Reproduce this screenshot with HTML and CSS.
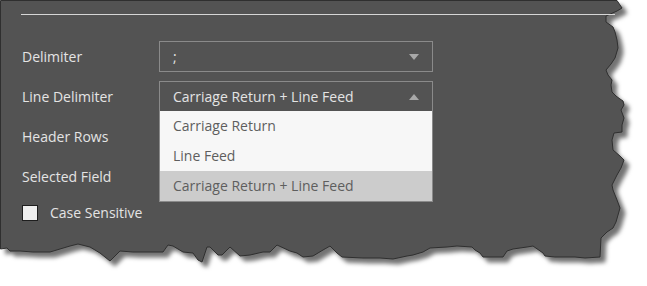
FILE: index.html
```html
<!DOCTYPE html>
<html lang="en">
<head>
  <meta charset="UTF-8">
  <meta name="viewport" content="width=device-width, initial-scale=1">
  <title>CSV Options</title>
  <link rel="stylesheet" href="styles.css">
</head>
<body>

  <div class="sheet">
    <!-- torn paper background -->
    <svg class="paper" width="647" height="286" viewBox="0 0 647 286">
      <path d="M0.5,0.5 L617,0.5 L620,5 L622,8 L617,11 L606,16 L606,22 L613,27 L615,32 L617,40 L618,48 L615,58 L611,64 L606,70 L608,75 L612,80 L611,85 L612,92 L616,96 L620,99 L623,101 L624,105 L621,110 L624,118 L622,125 L622,132 L614,133 L612,140 L613,150 L620,156 L624,160 L621,168 L617,175 L612,185 L613,190 L617,200 L620,208 L618,215 L616,222 L613,228 L607,232 L601,238 L600,257 L585,258 L575,257 L555,257 L545,256 L543,253 L533,246 L527,247 L513,249 L507,251 L503,257 L483,257 L480,253 L475,250 L472,247 L457,246 L447,247 L430,248 L423,252 L413,255 L407,256 L393,259 L380,258 L363,258 L342,257 L337,253 L330,246 L323,250 L313,256 L303,257 L297,253 L290,251 L277,245 L270,252 L263,252 L250,255 L240,256 L230,247 L222,255 L218,255 L210,247 L207,247 L202,262 L198,260 L193,253 L183,252 L173,246 L168,245 L163,252 L150,252 L133,252 L120,251 L110,261 L100,253 L90,247 L78,244 L70,246 L60,249 L50,252 L33,252 L20,251 L10,251 L7,248 L0.5,249 Z"/>
    </svg>

    <div class="content">
      <div class="rule"></div>

      <div class="form">
        <div class="row">
          <span class="label">Delimiter</span>
          <div class="select">
            <span class="value">;</span>
            <i class="caret"></i>
          </div>
        </div>

        <div class="row">
          <span class="label">Line Delimiter</span>
          <div class="select open">
            <span class="value">Carriage Return + Line Feed</span>
            <i class="caret up"></i>
            <ul class="options">
              <li>Carriage Return</li>
              <li>Line Feed</li>
              <li class="selected">Carriage Return + Line Feed</li>
            </ul>
          </div>
        </div>

        <div class="row">
          <span class="label">Header Rows</span>
        </div>

        <div class="row">
          <span class="label">Selected Field</span>
        </div>
      </div>

      <div class="check">
        <span class="box"></span>
        <span>Case Sensitive</span>
      </div>
    </div>
  </div>

</body>
</html>
```

FILE: styles.css
```css
body {
  margin: 0;
  background: #ffffff;
  font-family: "Open Sans", Arial, sans-serif;
  font-size: 14px;
}
.sheet {
  position: relative;
  width: 647px;
  height: 286px;
}
.paper {
  position: absolute;
  top: 0;
  left: 0;
  filter: drop-shadow(5px 5px 2px rgba(0,0,0,0.55));
}
.paper path {
  fill: #535353;
  stroke: #2f2f2f;
  stroke-width: 1;
}
.content {
  position: relative;
  padding: 14px 0 0 21px;
  color: #e4e4e4;
}
.rule {
  width: 594px;
  height: 1px;
  background: #d6d6d6;
}
.form {
  display: grid;
  grid-template-columns: 138px 274px;
  grid-auto-rows: 31px;
  row-gap: 9px;
  margin-top: 26px;
}
.row {
  display: contents;
}
.label {
  grid-column: 1;
  display: flex;
  align-items: center;
  padding-left: 1px;
}
.select {
  grid-column: 2;
  position: relative;
  display: flex;
  align-items: center;
  justify-content: space-between;
  box-sizing: border-box;
  border: 1px solid #8a8a8a;
  padding: 0 13px 0 13px;
}
.caret {
  width: 0;
  height: 0;
  border-left: 5.5px solid transparent;
  border-right: 5.5px solid transparent;
  border-top: 6px solid #a8a8a8;
}
.caret.up {
  border-top: none;
  border-bottom: 6px solid #a8a8a8;
}
.options {
  position: absolute;
  top: 100%;
  left: -1px;
  right: -1px;
  margin: 0;
  padding: 0;
  list-style: none;
  background: #f7f7f7;
  border: 1px solid #8a8a8a;
  border-top: none;
  z-index: 2;
}
.options li {
  height: 30px;
  line-height: 30px;
  padding-left: 13px;
  color: #5e5e5e;
}
.options li.selected {
  background: #cccccc;
}
.check {
  display: flex;
  align-items: center;
  gap: 12px;
  margin-top: 11px;
  padding-left: 1px;
}
.box {
  width: 14px;
  height: 14px;
  background: #efefef;
  border: 1px solid #1e1e1e;
}
```
